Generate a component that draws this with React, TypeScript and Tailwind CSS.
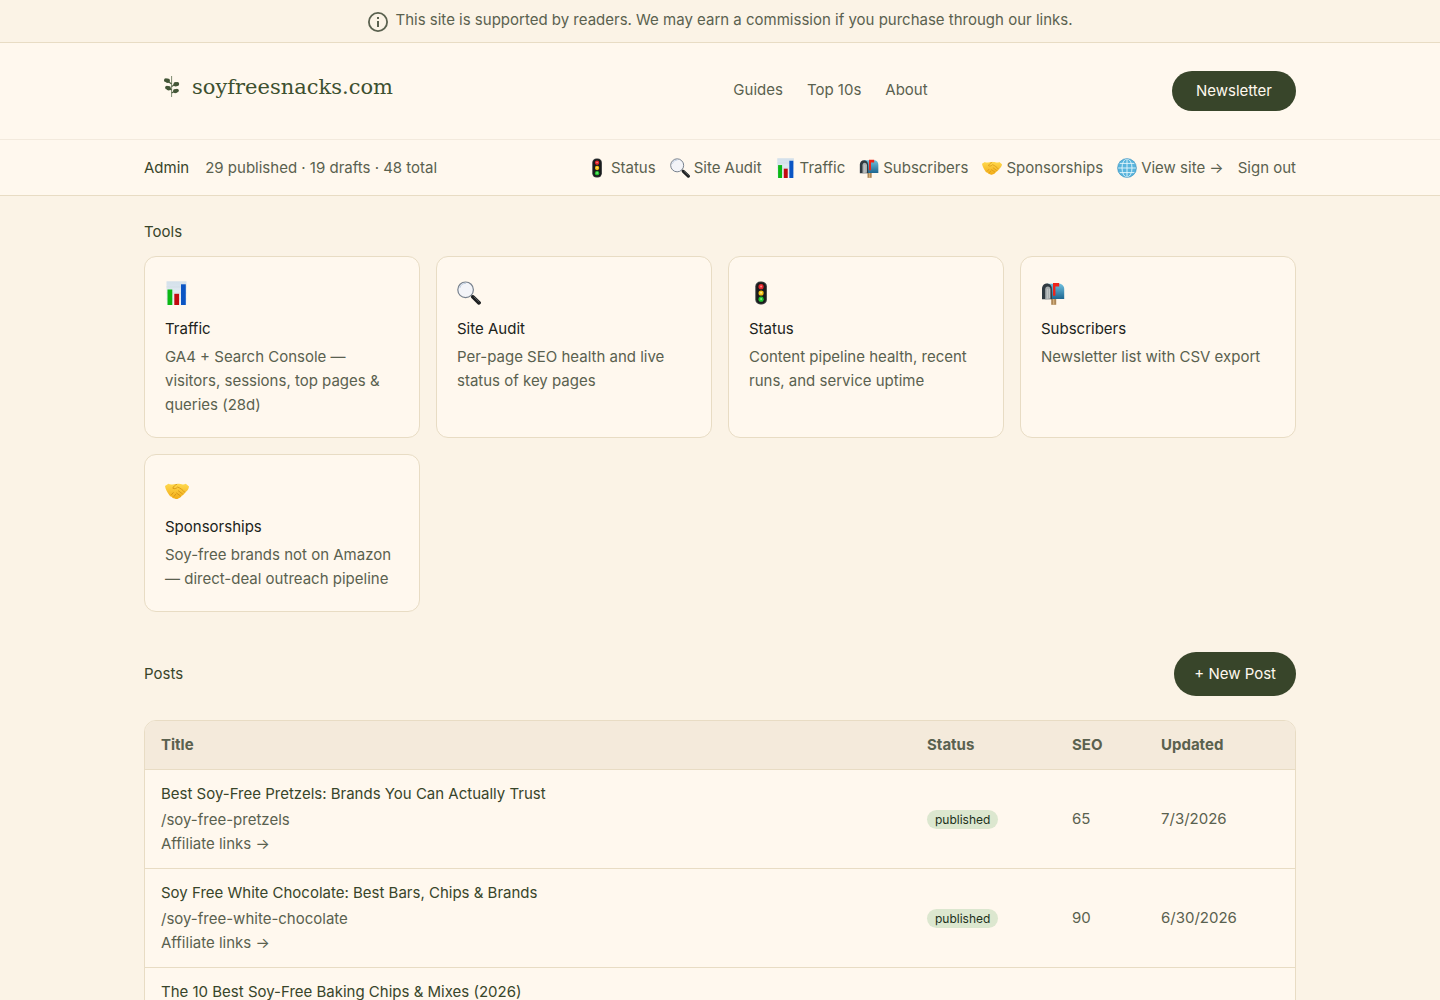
import React from 'react';

interface IconProps {
  className?: string;
}

interface Tool {
  title: string;
  description: string;
  Icon: React.FC<IconProps>;
}

interface Post {
  title: string;
  slug: string;
  status: string;
  seo: number;
  updated: string;
}

const ChartIcon: React.FC<IconProps> = ({ className }) => (
  <svg viewBox="0 0 24 24" className={className} aria-hidden="true">
    <defs>
      <linearGradient id="chart-bg" x1="0" y1="0" x2="0" y2="1">
        <stop offset="0" stopColor="#d3e0ea" />
        <stop offset="1" stopColor="#f1f5f8" />
      </linearGradient>
    </defs>
    <rect x="1.5" y="0.3" width="20" height="23.7" fill="url(#chart-bg)" />
    <path d="M1.5 6h20M1.5 12h20M1.5 18h20" stroke="#c5d2dc" strokeWidth="0.4" />
    <rect x="2.5" y="8.5" width="4.8" height="15.5" fill="#0cb814" />
    <rect x="9.3" y="12.8" width="4.8" height="11.2" fill="#c20b10" />
    <rect x="16" y="3.3" width="4.8" height="20.7" fill="#0b55c4" />
  </svg>
);

const SearchIcon: React.FC<IconProps> = ({ className }) => (
  <svg viewBox="0 0 24 24" className={className} aria-hidden="true">
    <path d="M14 14l2.6 2.6" stroke="#555" strokeWidth="1.8" />
    <path d="M16 16l6 5.8" stroke="#1d1f20" strokeWidth="3.8" strokeLinecap="round" />
    <path d="M17 16l5 4.8" stroke="#63686b" strokeWidth="0.8" strokeLinecap="round" />
    <circle cx="8.6" cy="8.8" r="7.8" fill="#f3f4f8" stroke="#78828e" strokeWidth="1.2" />
    <path d="M2.8 7A6.4 6.4 0 0 1 9 2.3" fill="none" stroke="#b9c9df" strokeWidth="0.9" />
  </svg>
);

const TrafficLightIcon: React.FC<IconProps> = ({ className }) => (
  <svg viewBox="0 0 24 24" className={className} aria-hidden="true">
    <rect x="6.3" y="0.6" width="11.6" height="22.8" rx="5" fill="#3a3d3f" />
    <rect x="7.3" y="1.6" width="9.6" height="20.8" rx="4.2" fill="#191b1c" />
    <circle cx="12.1" cy="5.7" r="2.6" fill="#e3262d" />
    <circle cx="12.1" cy="12" r="2.6" fill="#f5c116" />
    <circle cx="12.1" cy="18.2" r="2.6" fill="#22c432" />
    <circle cx="12.1" cy="5.4" r="1" fill="#ff8583" />
    <circle cx="12.1" cy="11.7" r="1" fill="#fff08a" />
    <circle cx="12.1" cy="17.9" r="1" fill="#80f383" />
  </svg>
);

const MailboxIcon: React.FC<IconProps> = ({ className }) => (
  <svg viewBox="0 0 24 24" className={className} aria-hidden="true">
    <defs>
      <linearGradient id="mailbox-body" x1="0" y1="0" x2="0" y2="1">
        <stop offset="0" stopColor="#6fc0df" />
        <stop offset="1" stopColor="#1d6690" />
      </linearGradient>
    </defs>
    <rect x="10.2" y="17" width="5" height="6.8" fill="#ad8757" />
    <path d="M12.7 17v6.8" stroke="#d6b582" strokeWidth="1.2" />
    <path d="M6 2.7h12.2c3.2 0 5 2.6 5 5.4v10H6z" fill="url(#mailbox-body)" />
    <path d="M1 18.3V8.1c0-3.4 2-5.5 4.9-5.5s5 2.2 5 5.5v10.2z" fill="#303a40" />
    <path d="M4.2 18.5V8.6c0-1.7 1-3 2.6-3s2.7 1.2 2.7 3v9.1z" fill="#a6acad" />
    <path d="M6.4 17.5V8M8.4 17V8" stroke="#d7d9d7" strokeWidth="0.6" />
    <path d="M12 2h6.2v3.5h-3.8v9.2H12z" fill="#ef2419" />
  </svg>
);

const HandshakeIcon: React.FC<IconProps> = ({ className }) => (
  <svg viewBox="0 0 24 24" className={className} aria-hidden="true">
    <defs>
      <linearGradient id="hands" x1="0" y1="0" x2="0" y2="1">
        <stop offset="0" stopColor="#ffd94d" />
        <stop offset="1" stopColor="#f2ac18" />
      </linearGradient>
    </defs>
    <path
      d="M0 7l3.4-2.3c1.2.7 2.4 1 4 .7 1.5-.3 3-.8 4.4-.2 1.6-.7 3.5-.5 5 .1 1.4.5 2.7.2 4-.5L24 7.400c-.2 2.500-1.700 4.500-3.900 6-.6 1.600-2 2.600-3.300 3.400-.8 1.400-2.200 2.300-3.500 2.700-1.100.9-2.700.6-3.500-.1-1.500.1-2.500-.7-3.100-1.700-1.600-.3-2.500-1.300-3-2.500C2.600 13.700.4 10.400 0 7z"
      fill="url(#hands)"
    />
    <path
      d="M11.8 5.3c-2 .9-3.300 2.200-4 3.900 1.700 1.100 3.700.2 4.900-1.200 2.600 1.200 5.200 3 7.100 5.300M11.500 14l3.800 2.800M13.400 11.800l4 3M6.500 15.600l1.800-2M9 17.400l1.600-2"
      fill="none"
      stroke="#d18f14"
      strokeWidth="0.8"
      strokeLinecap="round"
    />
  </svg>
);

const GlobeIcon: React.FC<IconProps> = ({ className }) => (
  <svg viewBox="0 0 24 24" className={className} aria-hidden="true">
    <circle cx="12" cy="12" r="11.4" fill="#58b4dc" />
    <g fill="none" stroke="#e4f6fc" strokeWidth="1.1">
      <ellipse cx="12" cy="12" rx="6" ry="11" />
      <path d="M12 1v22M1 12h22M3 6.5h18M3 17.5h18" />
    </g>
    <circle cx="12" cy="12" r="11.3" fill="none" stroke="#398fbd" strokeWidth="0.7" />
  </svg>
);

const InfoIcon: React.FC<IconProps> = ({ className }) => (
  <svg viewBox="0 0 20 20" className={className} aria-hidden="true">
    <circle cx="10" cy="10" r="9.1" fill="none" stroke="currentColor" strokeWidth="1.8" />
    <path d="M9 5h2v2H9zM9 9h2v6H9z" fill="currentColor" />
  </svg>
);

const SprigIcon: React.FC<IconProps> = ({ className }) => (
  <svg viewBox="0 0 16 22" className={className} aria-hidden="true">
    <path d="M7.6 0v21" stroke="#7d8a70" strokeWidth="1" />
    <path d="M7.6 8L3.500 5M7.600 10.500L12 8M7.600 14L4.500 12M7.600 17L11 15" stroke="#4a5d3d" strokeWidth="1.2" />
    <g fill="#435637">
      <circle cx="1.9" cy="4.2" r="1.900" />
      <circle cx="3.7" cy="4.7" r="2.300" />
      <circle cx="13.300" cy="8" r="1.900" />
      <circle cx="11.700" cy="8.300" r="2.300" />
      <circle cx="3" cy="11.600" r="1.900" />
      <circle cx="4.700" cy="12.200" r="2.200" />
      <circle cx="12.900" cy="14.600" r="1.900" />
      <circle cx="11.200" cy="15.100" r="2.200" />
    </g>
  </svg>
);

const siteLinks = ['Guides', 'Top 10s', 'About'];

const adminLinks = [
  { label: 'Status', Icon: TrafficLightIcon },
  { label: 'Site Audit', Icon: SearchIcon },
  { label: 'Traffic', Icon: ChartIcon },
  { label: 'Subscribers', Icon: MailboxIcon },
  { label: 'Sponsorships', Icon: HandshakeIcon },
  { label: 'View site →', Icon: GlobeIcon }
];

const tools: Tool[] = [
  {
    title: 'Traffic',
    description: 'GA4 + Search Console — visitors, sessions, top pages & queries (28d)',
    Icon: ChartIcon
  },
  { title: 'Site Audit', description: 'Per-page SEO health and live status of key pages', Icon: SearchIcon },
  { title: 'Status', description: 'Content pipeline health, recent runs, and service uptime', Icon: TrafficLightIcon },
  { title: 'Subscribers', description: 'Newsletter list with CSV export', Icon: MailboxIcon },
  { title: 'Sponsorships', description: 'Soy-free brands not on Amazon — direct-deal outreach pipeline', Icon: HandshakeIcon }
];

const posts: Post[] = [
  {
    title: 'Best Soy-Free Pretzels: Brands You Can Actually Trust',
    slug: '/soy-free-pretzels',
    status: 'published',
    seo: 65,
    updated: '7/3/2026'
  },
  {
    title: 'Soy Free White Chocolate: Best Bars, Chips & Brands',
    slug: '/soy-free-white-chocolate',
    status: 'published',
    seo: 90,
    updated: '6/30/2026'
  },
  {
    title: 'The 10 Best Soy-Free Baking Chips & Mixes (2026)',
    slug: '/soy-free-baking-chips',
    status: 'published',
    seo: 85,
    updated: '6/29/2026'
  }
];

const App: React.FC = () => {
  return (
    <div className="min-h-screen bg-[#fbf3e6] font-['Inter',sans-serif] text-[15px] leading-6 text-[#5a614f]">
      <div className="flex items-center justify-center gap-2 border-b border-[#e8dcc4] px-4 pt-2 pb-2.5">
        <InfoIcon className="mt-1 size-5 shrink-0" />
        <p>
          This site is supported by readers. We may earn a commission if you purchase through our links.
        </p>
      </div>

      <header className="border-b border-[#f3eadd] bg-[#fff8ee]">
        <div className="mx-auto flex h-24 max-w-6xl items-center justify-between">
          <a href="#" className="flex items-center gap-3 pr-24 pb-2 pl-5 text-[#3d5030]">
            <SprigIcon className="h-[22px] w-4" />
            <span className="font-['DejaVu_Serif',serif] text-[21px]">soyfreesnacks.com</span>
          </a>
          <nav className="flex gap-6 pb-0.5">
            {siteLinks.map((label) => (
              <a key={label} href="#">
                {label}
              </a>
            ))}
          </nav>
          <button type="button" className="h-10 rounded-full bg-[#38452a] px-6 text-[#fff8ee]">
            Newsletter
          </button>
        </div>
      </header>

      <div className="border-b border-[#e8dcc4] bg-[#fff8ee]">
        <div className="mx-auto flex h-[55px] max-w-6xl items-center justify-between">
          <div className="flex gap-4">
            <a href="#" className="text-[#38452a]">
              Admin
            </a>
            <span>29 published · 19 drafts · 48 total</span>
          </div>
          <nav className="flex gap-3.5">
            {adminLinks.map(({ label, Icon }) => (
              <a key={label} href="#" className="flex items-center gap-1">
                <Icon className="size-5" />
                {label}
              </a>
            ))}
            <button type="button">Sign out</button>
          </nav>
        </div>
      </div>

      <main className="mx-auto max-w-6xl pt-6 pb-16">
        <h2 className="mb-3 text-[#38452a]">Tools</h2>
        <div className="mb-10 grid grid-cols-4 gap-4">
          {tools.map(({ title, description, Icon }) => (
            <a key={title} href="#" className="rounded-xl border border-[#e8dcc4] bg-[#fff8ee] p-5">
              <div className="mb-2 flex h-8 items-center">
                <Icon className="size-6" />
              </div>
              <h3 className="mb-1 text-[#20231b]">{title}</h3>
              <p>{description}</p>
            </a>
          ))}
        </div>

        <div className="mb-6 flex items-center justify-between">
          <h2 className="text-[#38452a]">Posts</h2>
          <button type="button" className="h-11 rounded-full bg-[#38452a] px-5 text-[#fff8ee]">
            + New Post
          </button>
        </div>

        <div className="overflow-hidden rounded-xl border border-[#e8dcc4] bg-[#fff8ee]">
          <table className="w-full table-fixed text-left">
            <thead className="border-b border-[#e8dcc4] bg-[#f4eadb]">
              <tr>
                <th className="px-4 py-3 font-bold">Title</th>
                <th className="w-[145px] px-4 py-3 font-bold">Status</th>
                <th className="w-[89px] px-4 py-3 font-bold">SEO</th>
                <th className="w-[150px] px-4 py-3 font-bold">Updated</th>
              </tr>
            </thead>
            <tbody>
              {posts.map((post) => (
                <tr key={post.slug} className="border-b border-[#e8dcc4]">
                  <td className="px-4 py-3">
                    <a href="#" className="mb-0.5 block text-[#38452a]">
                      {post.title}
                    </a>
                    <div>{post.slug}</div>
                    <a href="#">Affiliate links →</a>
                  </td>
                  <td className="px-4 py-3">
                    <span className="rounded-full bg-[#dce7cf] px-2 py-0.5 text-xs text-[#20301a]">{post.status}</span>
                  </td>
                  <td className="px-4 py-3">{post.seo}</td>
                  <td className="px-4 py-3">{post.updated}</td>
                </tr>
              ))}
            </tbody>
          </table>
        </div>
      </main>
    </div>
  );
};

export default App;
